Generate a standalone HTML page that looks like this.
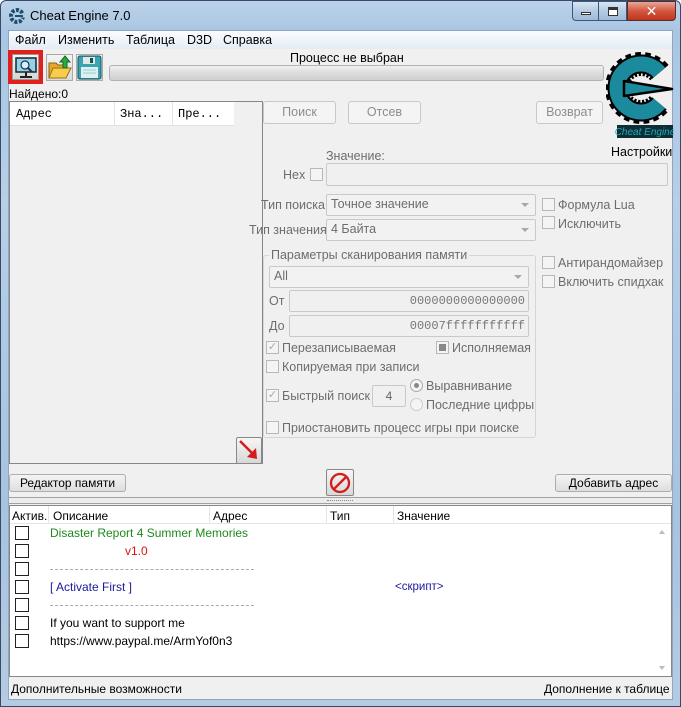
<!DOCTYPE html>
<html><head><meta charset="utf-8"><style>
*{margin:0;padding:0;box-sizing:border-box}
body{width:681px;height:707px;overflow:hidden;font-family:"Liberation Sans","DejaVu Sans",sans-serif;font-size:12px;color:#000;background:#fff}
.a{position:absolute}
#win{position:absolute;left:0;top:0;width:681px;height:707px;background:linear-gradient(180deg,#bcd3ea 0,#a9c6e2 30px,#b7cfe7 200px,#a8c3de 500px,#b5cbe2 707px);border:1px solid #374b66;border-radius:6px 6px 0 0}
#client{position:absolute;left:8px;top:30px;width:665px;height:670px;background:#f0f0f0;border:1px solid #8ea6c2}
.btn{position:absolute;border:1px solid #adadad;border-radius:3px;background:linear-gradient(#f4f4f4,#dedede);text-align:center;line-height:16px;font-size:12px}
.dis{border:1px solid #c8c8c8;background:#f4f4f4;color:#8d8d8d;line-height:20px;font-size:12.5px}
.g{color:#6d6d6d}
.cb{position:absolute;width:13px;height:13px;border:1px solid #b8b8b8;background:#f4f4f4}
.inp{position:absolute;border:1px solid #c9c9c9;background:#f0f0f0;border-radius:2px}
.combo{position:absolute;border:1px solid #c9c9c9;background:#f2f2f2;border-radius:2px;color:#6d6d6d;padding-left:4px;line-height:19px;font-size:12.5px}
.combo:after{content:"";position:absolute;right:6px;top:8px;border-left:4px solid transparent;border-right:4px solid transparent;border-top:4px solid #a8a8a8}
.ck{position:absolute;width:14px;height:14px;border:1px solid #222;background:#fff}
</style></head><body>
<div id="win">
<svg class="a" style="left:7px;top:6px" width="18" height="18" viewBox="0 0 18 18"><circle cx="9" cy="9" r="6" fill="none" stroke="#1d4f6a" stroke-width="4" stroke-dasharray="3 1.5"/><rect x="10" y="7.5" width="8" height="3" fill="#b8cfe6"/><rect x="7" y="8" width="8" height="2" fill="#1d4f6a"/></svg>
<div class="a" style="left:29px;top:7px;font-size:13px;color:#000">Cheat Engine 7.0</div>
<div class="a" style="left:571px;top:0;width:27px;height:20px;border:1px solid #3e5778;border-radius:0 0 0 4px;background:linear-gradient(#d8e6f4,#b4cbe3 50%,#9fbad8)"><div class="a" style="left:8px;top:10px;width:10px;height:3px;background:#fff;border:1px solid #333"></div></div>
<div class="a" style="left:597px;top:0;width:29px;height:20px;border:1px solid #3e5778;background:linear-gradient(#d8e6f4,#b4cbe3 50%,#9fbad8)"><div class="a" style="left:9px;top:5px;width:10px;height:9px;border:1px solid #333;border-top:3px solid #333;background:#fff"></div></div>
<div class="a" style="left:626px;top:0;width:49px;height:20px;border:1px solid #5a2a2a;border-radius:0 0 4px 0;background:linear-gradient(#e8a898,#d3573f 50%,#c0341c);color:#fff;font-weight:bold;font-size:14px;text-align:center;line-height:18px">✕</div>
</div>
<div id="client"></div>
<div class="a" style="left:9px;top:31px;width:663px;height:18px;background:linear-gradient(#fafcfe,#e4ecf5)"></div>
<div class="a" style="left:15px;top:33px;font-size:12.5px">Файл</div>
<div class="a" style="left:58px;top:33px;font-size:12.5px">Изменить</div>
<div class="a" style="left:126px;top:33px;font-size:12.5px">Таблица</div>
<div class="a" style="left:187px;top:33px;font-size:12.5px">D3D</div>
<div class="a" style="left:223px;top:33px;font-size:12.5px">Справка</div>
<div class="a" style="left:8px;top:50px;width:35px;height:34px;background:#e0211b"></div>
<div class="a" style="left:12px;top:54px;width:27px;height:26px;background:linear-gradient(#f5f5f5,#d5d5d5);border:1px solid #999"></div>
<svg class="a" style="left:13px;top:56px" width="26" height="24"><rect x="3" y="2" width="20" height="14" fill="#8fd4ef" stroke="#222" stroke-width="1.5"/><circle cx="12" cy="9" r="4" fill="#d4f0ff" stroke="#234" stroke-width="1.2"/><line x1="15" y1="12" x2="19" y2="16" stroke="#234" stroke-width="2"/><rect x="12" y="16" width="2" height="4" fill="#222"/><rect x="7" y="20" width="12" height="2" fill="#222"/></svg>
<div class="a" style="left:46px;top:54px;width:27px;height:27px;border:1px solid #aaa;background:linear-gradient(#f5f5f5,#dadada)"></div>
<svg class="a" style="left:46px;top:54px" width="27" height="27"><path d="M3 9h7l2 2h8v13H3z" fill="#e5a92c" stroke="#8a6210"/><path d="M3 24l4-10h18l-5 10z" fill="#f8cd4c" stroke="#9a7010"/><path d="M19 2l5 6h-3v6h-4V8h-3z" fill="#2ea842" stroke="#136b22"/></svg>
<div class="a" style="left:76px;top:54px;width:27px;height:27px;border:1px solid #aaa;background:linear-gradient(#f5f5f5,#dadada)"></div>
<svg class="a" style="left:76px;top:54px" width="27" height="27"><rect x="2" y="2" width="23" height="23" rx="2" fill="#3aa5b2" stroke="#14525a"/><rect x="7" y="3" width="12" height="7" fill="#e0e8ea"/><rect x="14" y="4" width="3" height="5" fill="#14525a"/><rect x="5" y="13" width="17" height="11" fill="#dff0f2"/><line x1="7" y1="16" x2="20" y2="16" stroke="#9cc"/><line x1="7" y1="19" x2="20" y2="19" stroke="#9cc"/></svg>
<div class="a" style="left:290px;top:51px;font-size:12.5px">Процесс не выбран</div>
<div class="a" style="left:109px;top:65px;width:495px;height:16px;border:1px solid #b2b2b2;border-radius:3px;background:linear-gradient(#f0f0f0,#dcdcdc 50%,#d0d0d0)"></div>
<!-- logo -->
<svg class="a" style="left:606px;top:48px" width="68" height="96" viewBox="0 0 68 96">
<path d="M53.4 24.6 A24 24 0 1 0 53.4 55.4" fill="none" stroke="#000" stroke-width="24" stroke-dasharray="4 3"/>
<path d="M53.4 24.6 A24 24 0 1 0 53.4 55.4" fill="none" stroke="#000" stroke-width="19"/>
<path d="M53.4 24.6 A24 24 0 1 0 53.4 55.4" fill="none" stroke="#1b8a9c" stroke-width="15"/>
<path d="M18 33 L66 41 L18 48 Z" fill="#1b8a9c" stroke="#000" stroke-width="2.5" stroke-linejoin="round"/>
<rect x="11" y="77" width="56" height="13" fill="#0b2f36"/>
<text x="39" y="87" text-anchor="middle" font-size="10" font-style="italic" fill="#2aa8b8" font-family="Liberation Sans,sans-serif">Cheat Engine</text>
</svg>
<div class="a" style="left:611px;top:145px;font-size:12.5px">Настройки</div>
<div class="a" style="left:9px;top:87px;font-size:12px">Найдено:0</div>
<div class="a" style="left:9px;top:101px;width:254px;height:363px;border:1px solid #828790;background:#f0f0f0"></div>
<div class="a" style="left:10px;top:102px;width:224px;height:24px;background:#fff;border-bottom:1px solid #e0e0e0;font-family:'Liberation Mono',monospace;font-size:12px">
<span class="a" style="left:6px;top:5px">Адрес</span><span class="a" style="left:104px;top:0;height:24px;border-left:1px solid #e3e3e3"></span><span class="a" style="left:110px;top:5px">Зна...</span><span class="a" style="left:162px;top:0;height:24px;border-left:1px solid #e3e3e3"></span><span class="a" style="left:168px;top:5px">Пре...</span></div>
<div class="btn dis" style="left:263px;top:101px;width:73px;height:23px">Поиск</div>
<div class="btn dis" style="left:348px;top:101px;width:73px;height:23px">Отсев</div>
<div class="btn dis" style="left:536px;top:101px;width:67px;height:23px">Возврат</div>
<div class="a g" style="left:326px;top:149px;font-size:12.5px">Значение:</div>
<div class="a g" style="left:283px;top:168px;font-size:12.5px">Hex</div>
<div class="cb" style="left:310px;top:168px"></div>
<div class="inp" style="left:326px;top:163px;width:342px;height:23px"></div>
<div class="a g" style="left:261px;top:198px;font-size:12.5px">Тип поиска</div>
<div class="combo" style="left:326px;top:194px;width:210px;height:22px">Точное значение</div>
<div class="a g" style="left:249px;top:223px;font-size:12.5px">Тип значения</div>
<div class="combo" style="left:326px;top:219px;width:210px;height:22px">4 Байта</div>
<div class="cb" style="left:542px;top:198px"></div><div class="a g" style="left:558px;top:198px;font-size:12.5px">Формула Lua</div>
<div class="cb" style="left:542px;top:216px"></div><div class="a g" style="left:558px;top:217px;font-size:12.5px">Исключить</div>
<div class="cb" style="left:542px;top:256px"></div><div class="a g" style="left:558px;top:256px;font-size:12.5px">Антирандомайзер</div>
<div class="cb" style="left:542px;top:275px"></div><div class="a g" style="left:558px;top:275px;font-size:12.5px">Включить спидхак</div>
<div class="a" style="left:263px;top:255px;width:273px;height:183px;border:1px solid #d5d5d5;border-radius:3px"></div>
<div class="a g" style="left:269px;top:248px;background:#f0f0f0;padding:0 2px;font-size:12.5px">Параметры сканирования памяти</div>
<div class="combo" style="left:269px;top:266px;width:260px;height:22px">All</div>
<div class="a g" style="left:269px;top:294px;font-size:12.5px">От</div>
<div class="inp" style="left:289px;top:290px;width:240px;height:22px;font-family:'Liberation Mono',monospace;color:#777;text-align:right;padding-right:3px;line-height:20px;font-size:12px">0000000000000000</div>
<div class="a g" style="left:269px;top:319px;font-size:12.5px">До</div>
<div class="inp" style="left:289px;top:315px;width:240px;height:22px;font-family:'Liberation Mono',monospace;color:#777;text-align:right;padding-right:3px;line-height:20px;font-size:12px">00007fffffffffff</div>
<div class="cb" style="left:266px;top:341px;color:#aaa;font-size:11px;line-height:11px;text-align:center">✓</div><div class="a g" style="left:282px;top:341px;font-size:12.5px">Перезаписываемая</div>
<div class="cb" style="left:436px;top:341px;padding:2px"><div style="width:7px;height:7px;background:#888"></div></div><div class="a g" style="left:452px;top:341px;font-size:12.5px">Исполняемая</div>
<div class="cb" style="left:266px;top:360px"></div><div class="a g" style="left:282px;top:360px;font-size:12.5px">Копируемая при записи</div>
<div class="cb" style="left:266px;top:389px;color:#aaa;font-size:11px;line-height:11px;text-align:center">✓</div><div class="a g" style="left:282px;top:389px;font-size:12.5px">Быстрый поиск</div>
<div class="inp" style="left:372px;top:385px;width:34px;height:22px;text-align:center;line-height:20px;color:#666">4</div>
<div class="a" style="left:410px;top:379px;width:13px;height:13px;border:1px solid #aaa;border-radius:50%;background:#f4f4f4"><div style="margin:3px;width:5px;height:5px;border-radius:50%;background:#888"></div></div><div class="a g" style="left:426px;top:379px;font-size:12.5px">Выравнивание</div>
<div class="a" style="left:410px;top:398px;width:13px;height:13px;border:1px solid #ccc;border-radius:50%;background:#f4f4f4"></div><div class="a g" style="left:426px;top:398px;font-size:12.5px">Последние цифры</div>
<div class="cb" style="left:266px;top:421px"></div><div class="a g" style="left:282px;top:421px;font-size:12.5px">Приостановить процесс игры при поиске</div>
<div class="a" style="left:236px;top:437px;width:26px;height:27px;border:1px solid #888;border-radius:2px;background:linear-gradient(#f6f6f6,#d8d8d8)"></div>
<svg class="a" style="left:237px;top:438px" width="24" height="24"><line x1="3" y1="3" x2="17" y2="17" stroke="#d31c1c" stroke-width="2.5"/><path d="M20 21 L10 19 L19 10 Z" fill="#d31c1c"/></svg>
<div class="btn" style="left:9px;top:474px;width:117px;height:18px">Редактор памяти</div>
<div class="a" style="left:326px;top:469px;width:28px;height:27px;border:1px solid #888;border-radius:2px;background:linear-gradient(#f6f6f6,#d8d8d8)"></div>
<svg class="a" style="left:328px;top:471px" width="24" height="24"><circle cx="12" cy="12" r="9" fill="none" stroke="#d31c1c" stroke-width="2.3"/><line x1="6" y1="18" x2="18" y2="6" stroke="#d31c1c" stroke-width="2.3"/></svg>
<div class="btn" style="left:555px;top:474px;width:117px;height:18px">Добавить адрес</div>
<div class="a" style="left:9px;top:497px;width:663px;height:7px;border-top:1px solid #a0a0a0;border-bottom:1px solid #a0a0a0;background:#ececec"></div>
<div class="a" style="left:327px;top:500px;width:26px;border-top:1px dotted #888"></div>
<div class="a" style="left:9px;top:505px;width:663px;height:172px;background:#fff;border:1px solid #828790"></div>
<div class="a" style="left:10px;top:506px;width:661px;height:18px;border-bottom:1px solid #e5e5e5;background:#fff"></div>
<div class="a" style="left:12px;top:509px">Актив.</div><div class="a" style="left:48px;top:506px;height:18px;border-left:1px solid #e5e5e5"></div>
<div class="a" style="left:53px;top:509px">Описание</div><div class="a" style="left:209px;top:506px;height:18px;border-left:1px solid #e5e5e5"></div>
<div class="a" style="left:213px;top:509px">Адрес</div><div class="a" style="left:326px;top:506px;height:18px;border-left:1px solid #e5e5e5"></div>
<div class="a" style="left:330px;top:509px">Тип</div><div class="a" style="left:393px;top:506px;height:18px;border-left:1px solid #e5e5e5"></div>
<div class="a" style="left:397px;top:509px">Значение</div>
<div class="a" style="left:655px;top:525px;width:16px;height:151px;background:#fff"></div>
<div class="a" style="left:659px;top:530px;border-left:3px solid transparent;border-right:3px solid transparent;border-bottom:4px solid #bbb"></div>
<div class="a" style="left:659px;top:666px;border-left:3px solid transparent;border-right:3px solid transparent;border-top:4px solid #bbb"></div>
<div class="ck" style="left:15px;top:526px"></div>
<div class="ck" style="left:15px;top:544px"></div>
<div class="ck" style="left:15px;top:562px"></div>
<div class="ck" style="left:15px;top:580px"></div>
<div class="ck" style="left:15px;top:598px"></div>
<div class="ck" style="left:15px;top:616px"></div>
<div class="ck" style="left:15px;top:634px"></div>
<div class="a" style="left:50px;top:526px;color:#1c8a1c">Disaster Report 4 Summer Memories</div>
<div class="a" style="left:125px;top:544px;color:#e01010">v1.0</div>
<div class="a" style="left:50px;top:569px;width:204px;border-top:1px dashed #aaa"></div>
<div class="a" style="left:50px;top:580px;color:#1a1a9a">[ Activate First ]</div>
<div class="a" style="left:395px;top:581px;color:#1a1a9a;font-size:11.5px">&lt;скрипт&gt;</div>
<div class="a" style="left:50px;top:605px;width:204px;border-top:1px dashed #aaa"></div>
<div class="a" style="left:50px;top:616px">If you want to support me</div>
<div class="a" style="left:50px;top:634px">https://www.paypal.me/ArmYof0n3</div>
<div class="a" style="left:11px;top:682px">Дополнительные возможности</div>
<div class="a" style="left:544px;top:682px">Дополнение к таблице</div>
</body></html>
